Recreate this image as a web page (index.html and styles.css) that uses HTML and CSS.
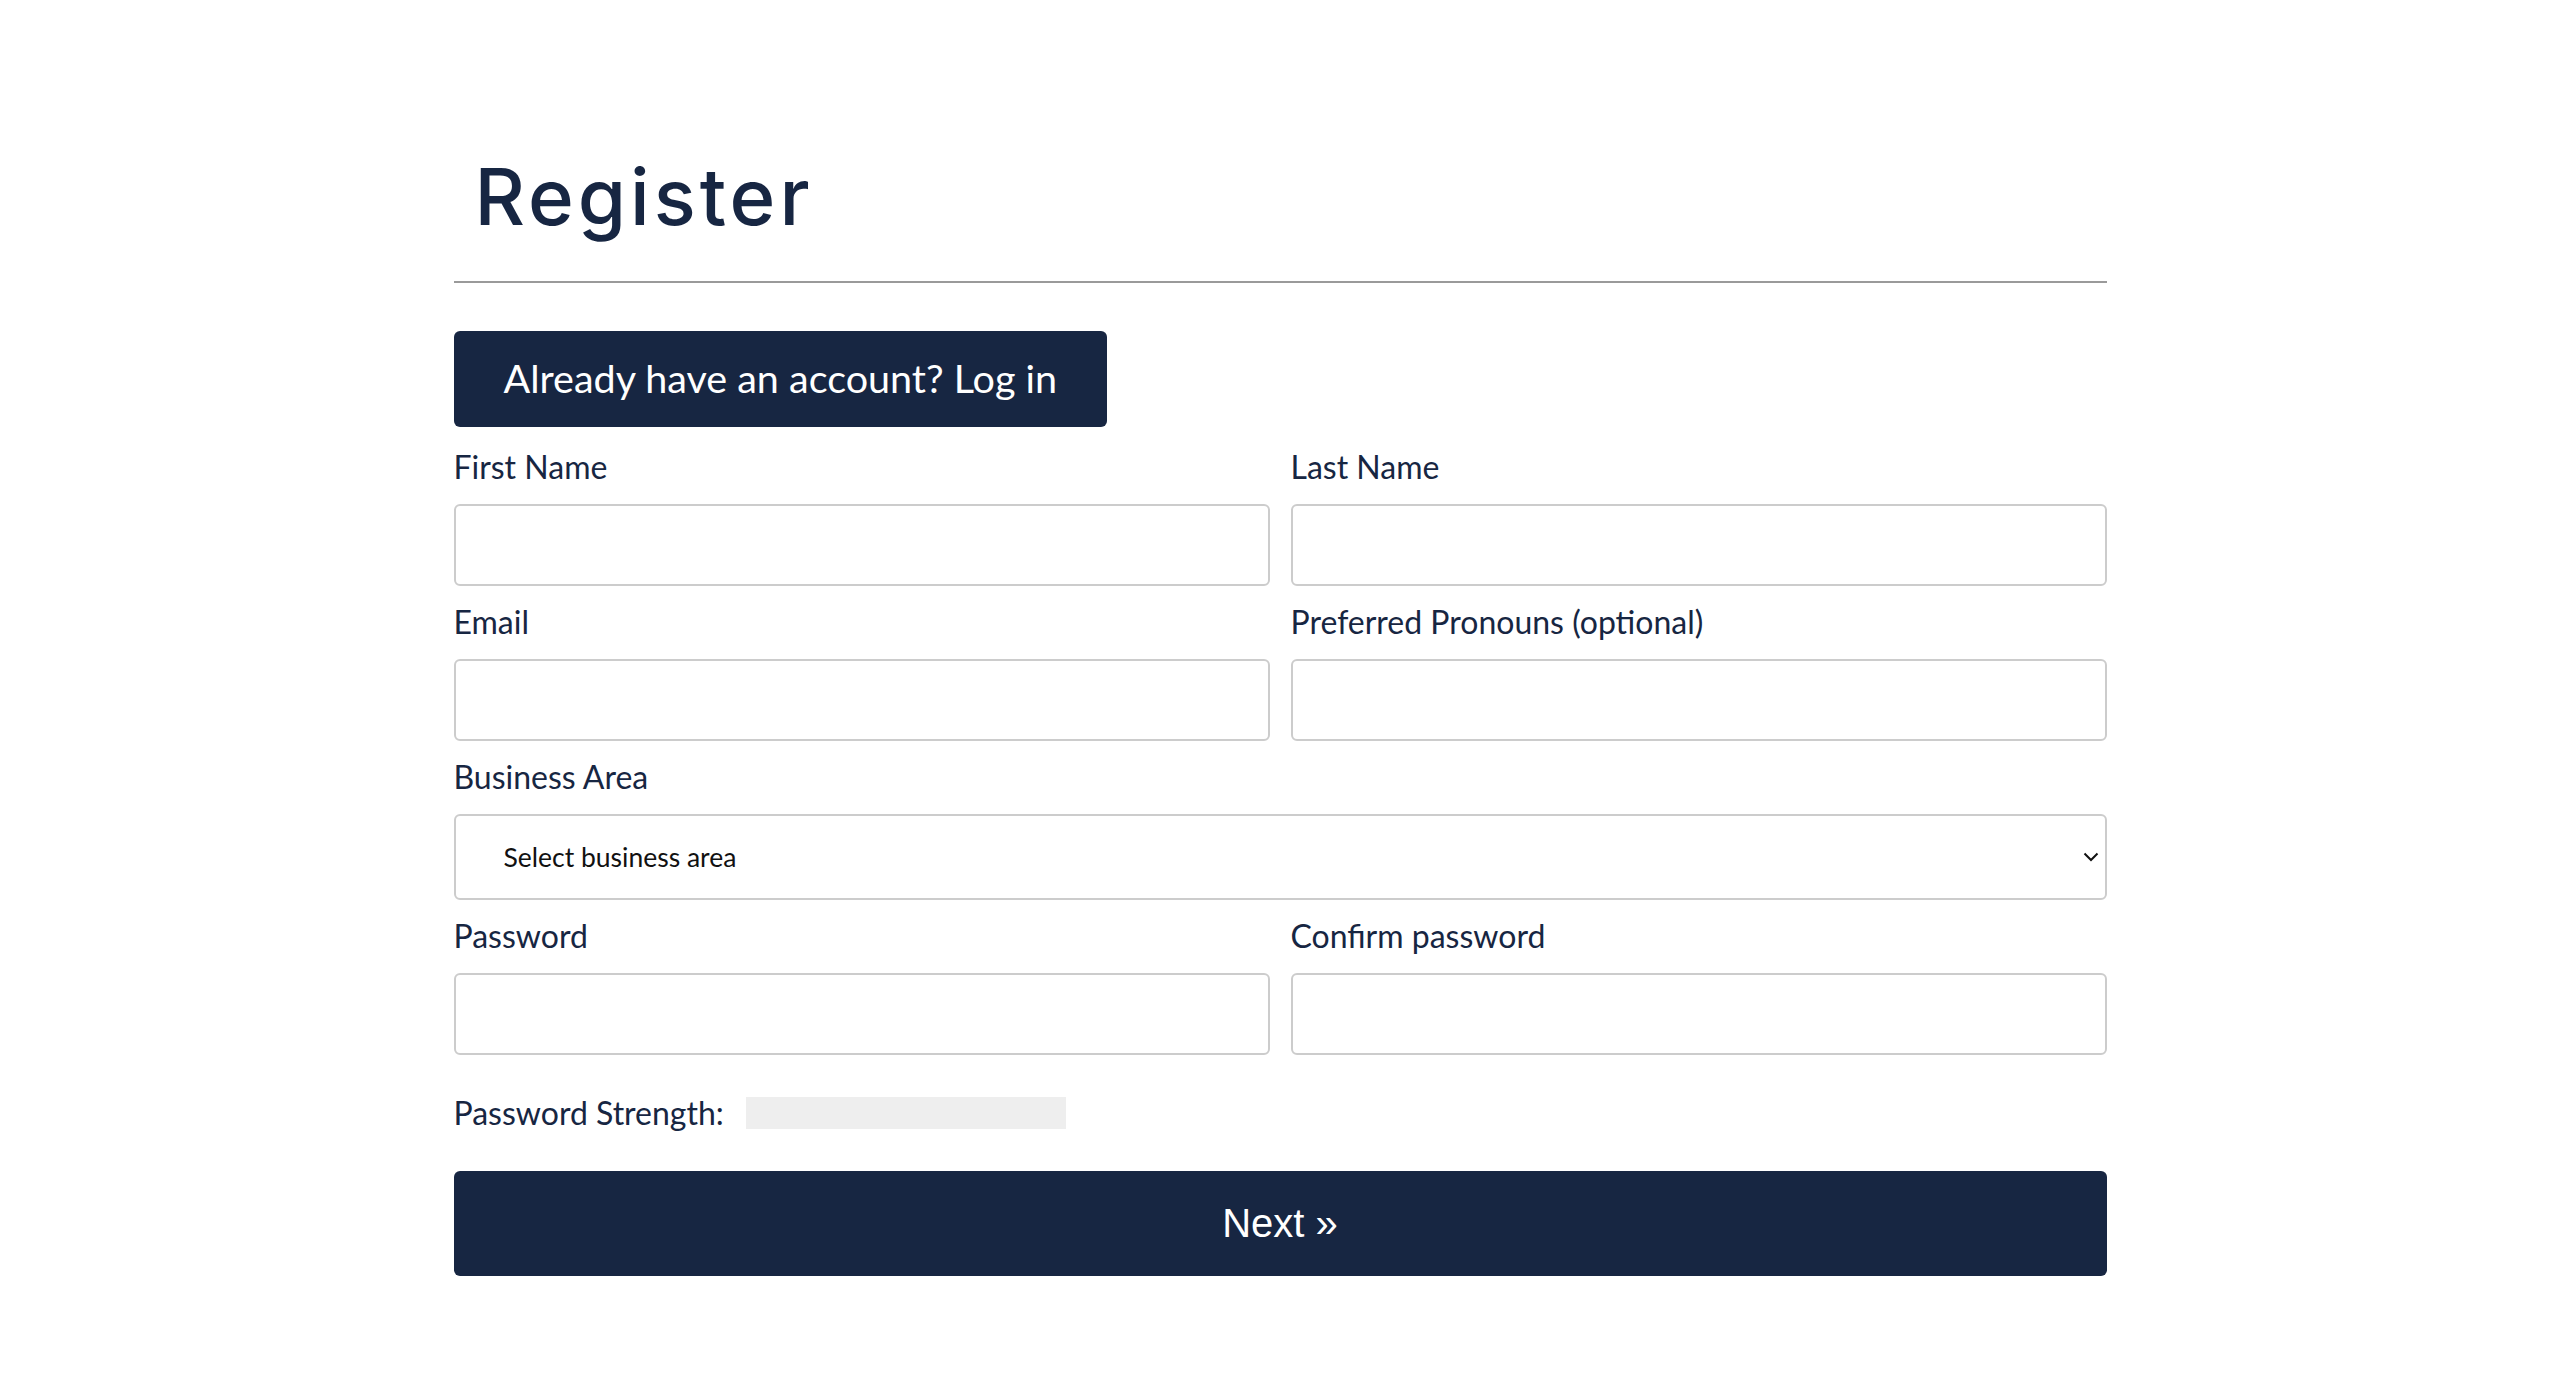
FILE: index.html
```html
<!DOCTYPE html>
<html lang="en">
<head>
<meta charset="utf-8">
<title>Register</title>
<link rel="stylesheet" href="styles.css">
</head>
<body>
<main class="page">
  <h1 class="title">Register</h1>
  <hr class="rule">
  <a class="login-btn" href="#">Already have an account? Log in</a>
  <form class="form">
    <div class="row two">
      <div class="field">
        <label class="label">First Name</label>
        <input class="input" type="text">
      </div>
      <div class="field">
        <label class="label">Last Name</label>
        <input class="input" type="text">
      </div>
    </div>
    <div class="row two">
      <div class="field">
        <label class="label">Email</label>
        <input class="input" type="email">
      </div>
      <div class="field">
        <label class="label">Preferred Pronouns (optional)</label>
        <input class="input" type="text">
      </div>
    </div>
    <div class="row">
      <div class="field">
        <label class="label">Business Area</label>
        <div class="select-wrap">
          <select class="select">
            <option>Select business area</option>
          </select>
          <svg class="chevron" width="16" height="10" viewBox="0 0 16 10"><path d="M1.5 1.5 L8 8 L14.5 1.5" fill="none" stroke="#111" stroke-width="2"/></svg>
        </div>
      </div>
    </div>
    <div class="row two">
      <div class="field">
        <label class="label">Password</label>
        <input class="input" type="password">
      </div>
      <div class="field">
        <label class="label">Confirm password</label>
        <input class="input" type="password">
      </div>
    </div>
    <div class="strength">
      <span class="label">Password Strength:</span>
      <span class="meter"></span>
    </div>
    <button class="next-btn" type="button">Next »</button>
  </form>
</main>
</body>
</html>
```
FILE: styles.css
```css
* { box-sizing: border-box; }
html, body { margin: 0; padding: 0; background: #fff; }
body { font-family: "Lato", "Liberation Sans", sans-serif; color: #172642; }

.page {
  width: 1653px;
  margin: 0 auto;
  padding-top: 149px;
}

.title {
  margin: 0;
  padding-left: 21px;
  font-family: "Inter", "Noto Sans", sans-serif;
  font-weight: 500;
  font-size: 78px;
  line-height: 96px;
  color: #172642;
  letter-spacing: 4px;
}

.rule {
  margin: 36px 0 0;
  border: 0;
  height: 2px;
  background: #9a9a9a;
}

.login-btn {
  display: inline-flex;
  align-items: center;
  height: 96px;
  margin-top: 48px;
  padding: 0 50px 2px;
  background: #172642;
  color: #fff;
  border-radius: 6px;
  font-size: 39.5px;
  line-height: 1;
  text-decoration: none;
}

.form {
  display: flex;
  flex-direction: column;
  margin-top: 21px;
}

.row { display: grid; grid-template-columns: 1fr; gap: 21px; margin-bottom: 17px; }
.row.two { grid-template-columns: 1fr 1fr; }

.field { display: flex; flex-direction: column; }

.label {
  font-size: 32px;
  line-height: 38px;
  color: #172642;
}

.input {
  margin-top: 18px;
  height: 82px;
  border: 2px solid #cccccc;
  border-radius: 6px;
  background: #fff;
  font-family: "Lato", sans-serif;
  font-size: 26px;
  padding: 0 20px;
}

.select-wrap {
  position: relative;
  margin-top: 18px;
}

.select {
  width: 100%;
  height: 86px;
  border: 2px solid #cccccc;
  border-radius: 6px;
  background: #fff;
  font-family: "Lato", sans-serif;
  font-size: 26.5px;
  color: #111;
  padding: 0 48px;
  -webkit-appearance: none;
  appearance: none;
}

.chevron {
  position: absolute;
  right: 8px;
  top: 38px;
}

.strength {
  display: flex;
  align-items: center;
  height: 38px;
  margin-top: 22px;
}

.meter {
  display: inline-block;
  width: 320px;
  height: 32px;
  margin-left: 22px;
  background: #eeeeee;
}

.next-btn {
  margin-top: 39px;
  height: 105px;
  width: 100%;
  border: 0;
  border-radius: 6px;
  background: #172642;
  color: #fff;
  font-family: "Liberation Sans", Arial, sans-serif;
  font-size: 40px;
}
```
